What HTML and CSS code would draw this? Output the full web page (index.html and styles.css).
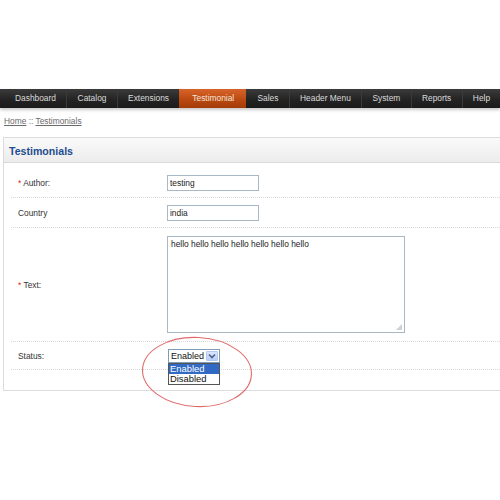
FILE: index.html
```html
<!DOCTYPE html>
<html>
<head>
<meta charset="utf-8">
<link rel="stylesheet" href="styles.css">
</head>
<body>
<div class="page">
  <ul class="menu">
    <li>Dashboard</li>
    <li>Catalog</li>
    <li>Extensions</li>
    <li class="active">Testimonial</li>
    <li>Sales</li>
    <li>Header Menu</li>
    <li>System</li>
    <li>Reports</li>
    <li>Help</li>
  </ul>
  <div class="breadcrumb"><a href="#">Home</a> :: <a href="#">Testimonials</a></div>
  <div class="box">
    <div class="heading">Testimonials</div>
    <div class="content">
      <div class="row">
        <div class="label"><span class="req">*</span> Author:</div>
        <div class="field"><input class="text" type="text" value="testing"></div>
      </div>
      <div class="row">
        <div class="label">Country</div>
        <div class="field"><input class="text" type="text" value="india"></div>
      </div>
      <div class="row row-text">
        <div class="label"><span class="req">*</span> Text:</div>
        <div class="field">
          <textarea class="area">hello hello hello hello hello hello hello</textarea>
          <span class="grip"></span>
        </div>
      </div>
      <div class="row row-status">
        <div class="label">Status:</div>
        <div class="field">
          <div class="select">
            <span class="select-value">Enabled</span>
            <span class="select-btn"><svg width="8" height="6" viewBox="0 0 8 6"><path d="M1 1.5 L4 4.5 L7 1.5" fill="none" stroke="#4d6185" stroke-width="1.6"/></svg></span>
            <ul class="options">
              <li class="selected">Enabled</li>
              <li>Disabled</li>
            </ul>
          </div>
          <svg class="circle" width="114" height="74" viewBox="0 0 114 74"><ellipse cx="57" cy="37" rx="54.5" ry="34.5" transform="rotate(3 57 37)" fill="none" stroke="#e06a6a" stroke-width="1.1"/></svg>
        </div>
      </div>
    </div>
  </div>
</div>
</body>
</html>
```
FILE: styles.css
```css
html, body {
  margin: 0;
  padding: 0;
  background: #fff;
}
body {
  font-family: "Liberation Sans", Arial, sans-serif;
  font-size: 8.4px;
  color: #333;
}
.page {
  padding-top: 89px;
  min-height: 500px;
  box-sizing: border-box;
}
.menu {
  list-style: none;
  margin: 0;
  padding: 0 0 0 4px;
  height: 19px;
  display: flex;
  background: linear-gradient(#3b3b3b, #222 60%, #1b1b1b);
  box-shadow: 0 2px 3px rgba(0, 0, 0, 0.22);
}
.menu li {
  padding: 0 10.3px;
  line-height: 19px;
  color: #dcdcdc;
  border-left: 1px solid #3a3a3a;
  white-space: nowrap;
}
.menu li:first-child {
  border-left: none;
  padding-left: 11px;
}
.menu li.active {
  background: linear-gradient(#d8632a, #b8480f 60%, #a33b08);
  color: #f7e6da;
  border-left-color: transparent;
  padding: 0 12px;
}
.menu li.active + li {
  border-left-color: transparent;
}
.breadcrumb {
  margin: 7px 0 0 4px;
  line-height: 12px;
  color: #777;
}
.breadcrumb a {
  color: #6b6b6b;
  text-decoration: underline;
}
.box {
  margin: 10px 0 0 3px;
  border: 1px solid #dcdcdc;
  border-right: none;
  height: 254px;
  box-sizing: border-box;
}
.heading {
  height: 24px;
  line-height: 26px;
  padding-left: 5px;
  background: linear-gradient(#fafafa, #ececec);
  border-bottom: 1px solid #dadada;
  font-size: 10.6px;
  font-weight: bold;
  color: #1f4d8e;
}
.content {
  padding: 5px 0 0 7px;
}
.row {
  display: flex;
  align-items: center;
  border-bottom: 1px dotted #d8d8d8;
  padding: 7px 0 6px;
}
.row-text {
  padding: 8px 0 8px;
}
.row-status {
  padding: 7px 0 6px;
}
.label {
  width: 149px;
  padding-left: 7px;
  color: #333;
}
.req {
  color: #e02020;
}
.field {
  position: relative;
}
.text {
  display: block;
  width: 92px;
  height: 16px;
  box-sizing: border-box;
  border: 1px solid #a8b8c6;
  padding: 0 2px;
  margin: 0;
  font-family: "Liberation Sans", Arial, sans-serif;
  font-size: 8.4px;
  color: #222;
  outline: none;
}
.area {
  display: block;
  width: 238px;
  height: 97px;
  box-sizing: border-box;
  border: 1px solid #a8b8c6;
  padding: 2px 3px;
  margin: 0;
  font-family: "Liberation Sans", Arial, sans-serif;
  font-size: 8.4px;
  color: #222;
  outline: none;
  resize: none;
}
.grip {
  position: absolute;
  right: 3px;
  bottom: 3px;
  width: 6px;
  height: 6px;
  background:
    radial-gradient(circle, #9a9a9a 0.6px, transparent 0.8px) 0 0 / 2px 2px;
  clip-path: polygon(100% 0, 100% 100%, 0 100%);
}
.select {
  position: relative;
  margin-left: 1px;
  width: 52px;
  height: 14px;
  box-sizing: border-box;
  border: 1px solid #7f9db9;
  display: flex;
  align-items: center;
  justify-content: space-between;
  background: #fff;
}
.select-value {
  padding-left: 2px;
  font-size: 9px;
  color: #111;
  line-height: 12px;
}
.select-btn {
  width: 12px;
  height: 10px;
  margin-right: 1px;
  background: linear-gradient(#dbe6fd, #b9cdf7);
  border: 1px solid #b4c7ee;
  box-sizing: border-box;
  border-radius: 1px;
  display: flex;
  align-items: center;
  justify-content: center;
}
.options {
  position: absolute;
  left: -1px;
  top: 13px;
  width: 52px;
  margin: 0;
  padding: 0;
  list-style: none;
  border: 1px solid #555;
  background: #fff;
  box-sizing: border-box;
  z-index: 2;
}
.options li {
  font-size: 9.4px;
  line-height: 10px;
  padding-left: 1px;
  color: #111;
}
.options li.selected {
  background: #316ac5;
  color: #fff;
}
.circle {
  position: absolute;
  left: -27px;
  top: -14px;
  overflow: visible;
  pointer-events: none;
  z-index: 3;
}
```
